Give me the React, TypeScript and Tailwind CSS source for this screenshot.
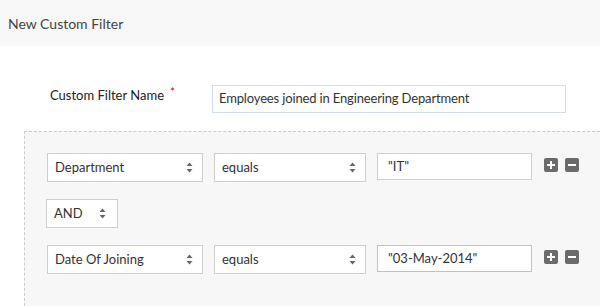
import React from 'react';

function Arrows() {
  return (
    <svg width="7" height="11" viewBox="0 0 7 11" className="shrink-0">
      <path d="M3.5 0.5 L6.5 4 L0.5 4 Z" fill="#666" />
      <path d="M0.5 7 L6.5 7 L3.5 10.5 Z" fill="#666" />
    </svg>
  );
}

function SelectBox({ label, width, arrowGap }: { label: string; width: string; arrowGap?: string }) {
  return (
    <div
      className={`${width} h-[29px] flex items-center justify-between bg-white border border-[#cfcfcf] pl-[7px] ${arrowGap ?? 'pr-[9px]'} text-[13px] text-[#333]`}
    >
      <span>{label}</span>
      <Arrows />
    </div>
  );
}

function IconButton({ kind }: { kind: 'plus' | 'minus' }) {
  return (
    <div className="w-[14px] h-[14px] rounded-[2px] bg-[#6b6b6b] flex items-center justify-center">
      <svg width="10" height="10" viewBox="0 0 10 10">
        <rect x="1" y="4" width="8" height="2" fill="#fff" />
        {kind === 'plus' && <rect x="4" y="1" width="2" height="8" fill="#fff" />}
      </svg>
    </div>
  );
}

function ConditionRow({ field, value, focused }: { field: string; value: string; focused?: boolean }) {
  return (
    <div className="flex items-start">
      <SelectBox label={field} width="w-[156px]" />
      <div className="ml-[11px]">
        <SelectBox label="equals" width="w-[152px]" />
      </div>
      <div
        className={`ml-[11px] w-[155px] h-[27px] bg-white border flex items-center pl-[10px] text-[13px] text-[#333] ${
          focused ? 'border-[#9fcbee]' : 'border-[#cfcfcf]'
        }`}
      >
        {value}
      </div>
      <div className="ml-[12px] mt-[5px] flex gap-[7px]">
        <IconButton kind="plus" />
        <IconButton kind="minus" />
      </div>
    </div>
  );
}

export default function App() {
  return (
    <div className="w-[600px] h-[306px] overflow-hidden bg-white flex flex-col font-['Lato','Open_Sans',sans-serif]">
      <div className="h-[46px] shrink-0 bg-[#f8f8f8] flex items-center pl-[8px] text-[14px] text-[#444]">
        New Custom Filter
      </div>

      <div className="mt-[39px] flex items-center">
        <div className="w-[212px] pl-[50px] pb-[6px] flex items-start text-[13px] text-[#222]">
          <span>Custom Filter Name</span>
          <span className="ml-[6px] -mt-[3px] text-[#e00] text-[12px]">*</span>
        </div>
        <div className="w-[354px] h-[28px] border border-[#d5dde8] flex items-center pl-[6px] text-[13px] tracking-[-0.15px] text-[#333]">
          Employees joined in Engineering Department
        </div>
      </div>

      <div className="mt-[18px] ml-[24px] flex-1 border-t border-l border-dashed border-[#cccccc] bg-[#f7f7f7] pt-[21px] pl-[22px]">
        <ConditionRow field="Department" value={'"IT"'} />
        <div className="mt-[17px] -ml-px">
          <SelectBox label="AND" width="w-[72px]" arrowGap="pr-[11px]" />
        </div>
        <div className="mt-[17px]">
          <ConditionRow field="Date Of Joining" value={'"03-May-2014"'} focused />
        </div>
      </div>
    </div>
  );
}
